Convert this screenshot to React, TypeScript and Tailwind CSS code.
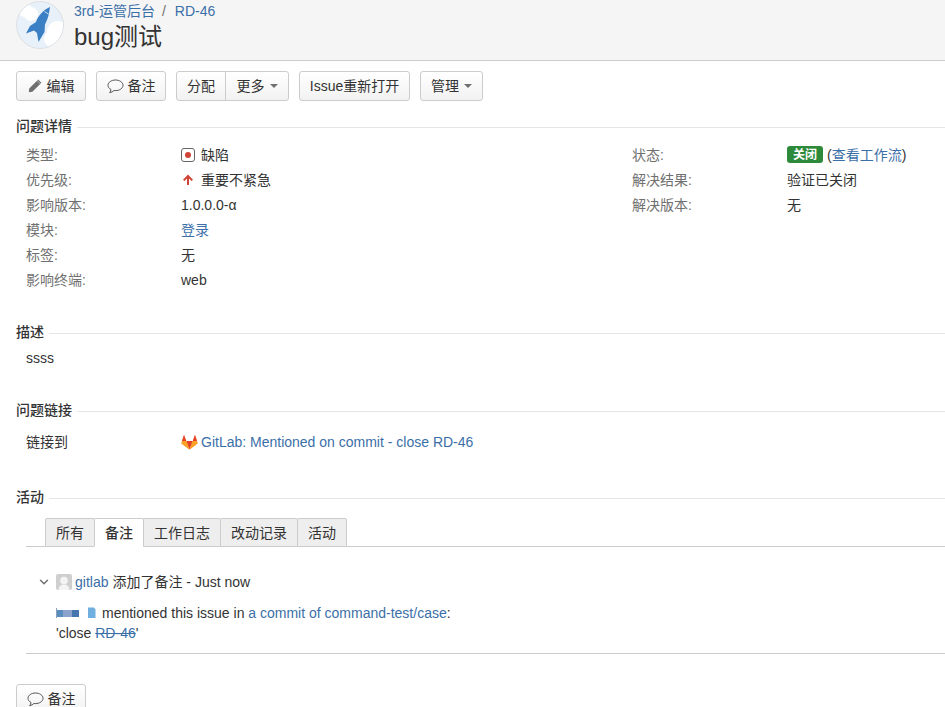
import { ChevronDown } from 'lucide-react'

const FONT = "font-['Liberation_Sans','Noto_Sans_CJK_SC',sans-serif]"
const LINK = 'text-[#3b6fa8]'

function RocketLogo() {
  return (
    <svg width="48" height="48" viewBox="0 0 48 48" className="block shrink-0">
      <defs>
        <clipPath id="logo-clip">
          <circle cx="24" cy="24" r="23" />
        </clipPath>
      </defs>
      <circle cx="24" cy="24" r="23.5" fill="#e8f1fa" stroke="#dcdfe3" />
      <g clipPath="url(#logo-clip)">
        <circle cx="9" cy="9" r="7" fill="#fff" />
        <circle cx="15" cy="13" r="7" fill="#fff" />
        <circle cx="42" cy="31" r="11" fill="#fff" />
        <circle cx="36" cy="38" r="8" fill="#fff" />
      </g>
      <path
        d="M34 6 L33 12 C32.500 16 30.500 20 29 23.500 L28.500 31 L22.500 41 L21 32 L18 29.500 L10 32.500 L14 25 L20 21 C22 15 27 9 34 6Z"
        fill="#3b7fc4"
      />
      <path d="M28.500 10.500 L32.500 13" stroke="#cfe0f2" strokeWidth="1" />
    </svg>
  )
}

function PencilIcon() {
  return (
    <svg width="14" height="14" viewBox="0 0 14 14" className="shrink-0">
      <path d="M10.200 0.600 L13.400 3.800 L12.500 4.700 L9.300 1.500Z M9 1.800 L12.200 5 L4.400 12.800 L0.800 13.200 L1.200 9.600Z" fill="#707070" />
    </svg>
  )
}

function BubbleIcon() {
  return (
    <svg width="17" height="15" viewBox="0 0 17 15" className="shrink-0">
      <path
        d="M8.500 1 C4.400 1 1 3.300 1 6.300 C1 8.100 2.200 9.600 4 10.500 C3.900 11.600 3.400 12.700 2.700 13.600 C4.500 13.400 5.900 12.600 6.900 11.500 C7.400 11.600 8 11.600 8.500 11.600 C12.600 11.600 16 9.300 16 6.300 C16 3.300 12.600 1 8.500 1Z"
        fill="none"
        stroke="#555"
        strokeWidth="1"
      />
    </svg>
  )
}

function Caret() {
  return <span className="ml-[5px] inline-block h-0 w-0 border-x-[4px] border-t-[4px] border-x-transparent border-t-[#707070]" />
}

function BugIcon() {
  return (
    <span className="flex h-[14px] w-[14px] items-center justify-center rounded-[3px] border border-[#666] bg-white">
      <span className="h-[6px] w-[6px] rounded-full bg-[#d04437]" />
    </span>
  )
}

function UpArrow() {
  return (
    <svg width="14" height="14" viewBox="0 0 14 14" className="shrink-0">
      <path d="M7 1.500 L12 6.800 L10.500 8 L8 5.600 L8 12 L6 12 L6 5.600 L3.500 8 L2 6.800Z" fill="#d04437" />
    </svg>
  )
}

function GitlabIcon() {
  return (
    <svg width="17" height="16" viewBox="0 0 17 16" className="shrink-0">
      <path d="M8.500 15.500 L0.500 9.500 L1 7 L3 1 L5.200 7Z" fill="#fc6d26" />
      <path d="M8.500 15.500 L16.500 9.500 L16 7 L14 1 L11.800 7Z" fill="#fc6d26" />
      <path d="M8.500 15.500 L5.200 7 L11.800 7Z" fill="#e24329" />
      <path d="M8.500 15.500 L0.500 9.500 L1 7 L5.200 7Z" fill="#fca326" />
      <path d="M8.500 15.500 L16.500 9.500 L16 7 L11.800 7Z" fill="#fca326" />
      <path d="M3 1 L5.200 7 L1 7Z M14 1 L11.800 7 L16 7Z" fill="#e24329" />
    </svg>
  )
}

function UserAvatar() {
  return (
    <svg width="16" height="16" viewBox="0 0 16 16" className="shrink-0">
      <rect width="16" height="16" rx="2" fill="#cfcfcf" />
      <circle cx="8" cy="6.500" r="3.800" fill="#f4f4f4" />
      <path d="M2.500 16 C3 12 5 10.500 8 10.500 C11 10.500 13 12 13.500 16Z" fill="#f4f4f4" />
    </svg>
  )
}

// blurred user name + small file glyph in the commit line
function CommitIcons() {
  return (
    <svg width="40" height="12" viewBox="0 0 40 12" className="shrink-0">
      <rect x="1" y="3" width="6" height="7" fill="#5b8cc0" />
      <rect x="0" y="1" width="1" height="10" fill="#8aa0b8" />
      <rect x="7" y="3" width="9" height="7" fill="#8ba3cc" />
      <rect x="16" y="3" width="7" height="7" fill="#4576ad" />
      <path d="M32 0.500 L38 0.500 L39.500 2.500 L39.500 11 L32 11Z" fill="#6fb0e0" />
    </svg>
  )
}

function Btn({ children, className = '' }: { children: React.ReactNode; className?: string }) {
  return (
    <button className={`flex h-[30px] items-center justify-center rounded-[3px] border border-[#ccc] bg-gradient-to-b from-white to-[#f2f2f2] text-[14px] text-[#333] ${className}`}>
      {children}
    </button>
  )
}

function Heading({ title }: { title: string }) {
  return (
    <div className="flex h-[20px] items-center">
      <h4 className="-mt-[2px] text-[14px] font-medium text-[#333]">{title}</h4>
      <div className="ml-[5px] h-px flex-1 bg-[#e6e6e6]" />
    </div>
  )
}

function Field({ label, children }: { label: string; children: React.ReactNode }) {
  return (
    <div className="flex h-[25px] items-center">
      <div className="w-[155px] shrink-0 text-[#707070]">{label}</div>
      <div className="flex items-center">{children}</div>
    </div>
  )
}

export default function App() {
  const tabs = [
    { name: '所有', w: 'w-[50px]' },
    { name: '备注', w: 'w-[50px]', active: true },
    { name: '工作日志', w: 'w-[78px]' },
    { name: '改动记录', w: 'w-[78px]' },
    { name: '活动', w: 'w-[50px]' },
  ]

  return (
    <div className={`h-[707px] w-[945px] overflow-hidden bg-white text-[14px] leading-[20px] text-[#333] ${FONT}`}>
      {/* Issue header */}
      <header className="flex h-[61px] border-b border-[#ccc] bg-[#f5f5f5] pl-[16px] pt-[1px]">
        <RocketLogo />
        <div className="ml-[10px]">
          <div className="flex h-[20px] items-center">
            <a className={LINK}>3rd-运管后台</a>
            <span className="ml-[7px] text-[#707070]">/</span>
            <a className={`ml-[9px] ${LINK}`}>RD-46</a>
          </div>
          <h1 className="mt-[1px] text-[24px] leading-[30px] text-[#333]">bug测试</h1>
        </div>
      </header>

      {/* Toolbar */}
      <div className="mt-[10px] flex gap-[10px] pl-[16px]">
        <Btn className="w-[70px] gap-[5px]"><PencilIcon />编辑</Btn>
        <Btn className="w-[70px] gap-[4px]"><BubbleIcon />备注</Btn>
        <div className="flex">
          <Btn className="w-[50px] rounded-r-none">分配</Btn>
          <Btn className="-ml-px w-[64px] rounded-l-none">更多<Caret /></Btn>
        </div>
        <Btn className="w-[111px]">Issue重新打开</Btn>
        <Btn className="w-[63px]">管理<Caret /></Btn>
      </div>

      {/* Details */}
      <section className="mt-[16px] pl-[16px]">
        <Heading title="问题详情" />
        <div className="mt-[5px] flex pl-[10px]">
          <div className="w-[606px] shrink-0">
            <Field label="类型:"><BugIcon /><span className="ml-[6px]">缺陷</span></Field>
            <Field label="优先级:"><UpArrow /><span className="ml-[6px]">重要不紧急</span></Field>
            <Field label="影响版本:">1.0.0.0-α</Field>
            <Field label="模块:"><a className={LINK}>登录</a></Field>
            <Field label="标签:">无</Field>
            <Field label="影响终端:">web</Field>
          </div>
          <div className="flex-1">
            <Field label="状态:">
              <span className="flex h-[17px] w-[36px] items-center justify-center rounded-[3px] bg-[#2c8a3a] text-[12px] font-bold text-white">关闭</span>
              <span className="ml-[4px]">(<a className={LINK}>查看工作流</a>)</span>
            </Field>
            <Field label="解决结果:">验证已关闭</Field>
            <Field label="解决版本:">无</Field>
          </div>
        </div>
      </section>

      {/* Description */}
      <section className="mt-[31px] pl-[16px]">
        <Heading title="描述" />
        <div className="mt-[5px] pl-[10px]">ssss</div>
      </section>

      {/* Links */}
      <section className="mt-[33px] pl-[16px]">
        <Heading title="问题链接" />
        <div className="mt-[11px] flex h-[20px] items-center pl-[10px]">
          <div className="w-[155px] shrink-0">链接到</div>
          <GitlabIcon />
          <a className={`ml-[3px] ${LINK}`}>GitLab: Mentioned on commit - close RD-46</a>
        </div>
      </section>

      {/* Activity */}
      <section className="mt-[36px] pl-[16px]">
        <Heading title="活动" />
        <div className="pl-[10px]">
          <div className="mt-[10px] flex h-[29px] border-b border-[#ccc] pl-[19px]">
            {tabs.map((t) => (
              <div
                key={t.name}
                className={`-ml-px flex h-[29px] items-center justify-center rounded-t-[2px] border border-[#ccc] first:ml-0 ${t.w} ${
                  t.active ? 'border-b-white bg-white font-medium' : 'bg-[#eee]'
                }`}
              >
                {t.name}
              </div>
            ))}
          </div>

          <div className="mt-[25px] flex h-[20px] items-center pl-[11px]">
            <ChevronDown size={14} strokeWidth={2.5} className="text-[#707070]" />
            <span className="ml-[5px]"><UserAvatar /></span>
            <a className={`ml-[3px] ${LINK}`}>gitlab</a>
            <span className="ml-[4px]">添加了备注 - Just now</span>
          </div>

          <div className="mt-[11px] pl-[30px]">
            <div className="flex h-[20px] items-center">
              <CommitIcons />
              <span className="ml-[6px]">mentioned this issue in&nbsp;</span>
              <a className={LINK}>a commit of command-test/case</a>:
            </div>
            <div className="h-[20px]">
              'close <a className={`line-through ${LINK}`}>RD-46</a>'
            </div>
          </div>
          <div className="mt-[10px] h-px bg-[#ccc]" />
        </div>

        <Btn className="mt-[30px] w-[70px] gap-[4px]"><BubbleIcon />备注</Btn>
      </section>
    </div>
  )
}
